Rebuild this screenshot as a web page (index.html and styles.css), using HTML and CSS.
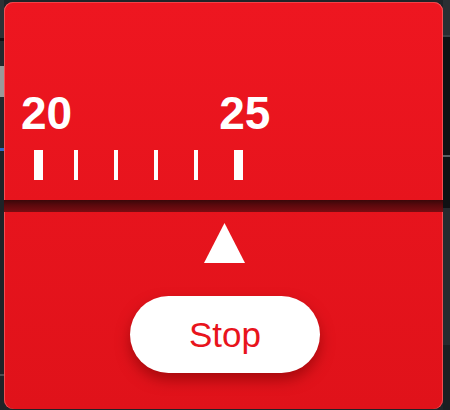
FILE: index.html
```html
<!DOCTYPE html>
<html lang="en">
<head>
<meta charset="utf-8">
<title>Timer ruler</title>
<link rel="stylesheet" href="styles.css">
</head>
<body>
  <div class="panel">
    <div class="scale">
      <div class="numbers">
        <span class="num">20</span>
        <span class="num">25</span>
      </div>
      <div class="ticks">
        <span class="cell"><span class="tick major"></span></span>
        <span class="cell"><span class="tick minor"></span></span>
        <span class="cell"><span class="tick minor"></span></span>
        <span class="cell"><span class="tick minor"></span></span>
        <span class="cell"><span class="tick minor"></span></span>
        <span class="cell"><span class="tick major"></span></span>
      </div>
    </div>
    <div class="rail"></div>
    <div class="lower">
      <svg class="pointer" width="41" height="40" viewBox="0 0 41 40" aria-hidden="true">
        <polygon points="20.5,0 41,40 0,40" fill="#ffffff"/>
      </svg>
      <button class="stop" type="button">Stop</button>
    </div>
  </div>
</body>
</html>
```
FILE: styles.css
```css
html, body {
  margin: 0;
  padding: 0;
}

body {
  width: 450px;
  height: 410px;
  overflow: hidden;
  font-family: "Liberation Sans", Arial, sans-serif;
  background:
    linear-gradient(to bottom, #2c3236 0 38px, #0e1012 38px 41px, #23292d 41px 66px, #9a9a9a 66px 97px, #23292d 97px 148px, #2d6ccc 148px 151px, #1e2327 151px 374px, #4a4f53 374px 376px, #1e2327 376px) left top / 4px 100% no-repeat,
    linear-gradient(to bottom, #2a2f33 0 35px, #3a4044 35px 37px, #0f1113 37px 155px, #5a5f63 155px 157px, #0f1113 157px 208px, #262b2f 208px 345px, #1b1f22 345px) right top / 7px 100% no-repeat,
    #1f2428;
}

.panel {
  width: 439px;
  height: 407px;
  margin: 2px 0 0 4px;
  border-radius: 9px;
  overflow: hidden;
  background: linear-gradient(to bottom, #ee1620, #e0121a);
  box-shadow: inset 1px 0 0 rgba(255, 130, 130, 0.55), inset -1px 0 0 rgba(255, 130, 130, 0.55), inset 0 1px 0 rgba(255, 130, 130, 0.4);
  display: flex;
  flex-direction: column;
}

.scale {
  height: 198px;
  box-sizing: border-box;
  padding-top: 88px;
}

.numbers {
  display: flex;
  gap: 147px;
  padding-left: 17px;
  height: 46px;
}

.num {
  color: #ffffff;
  font-weight: 700;
  font-size: 46px;
  line-height: 46px;
}

.ticks {
  display: flex;
  margin-top: 14px;
  padding-left: 30px;
  height: 30px;
}

.cell {
  width: 40px;
  display: flex;
}

.tick {
  display: block;
  height: 30px;
  background: #ffffff;
}

.tick.major {
  width: 9px;
}

.tick.minor {
  width: 4px;
}

.rail {
  height: 12px;
  flex: none;
  background: linear-gradient(to bottom, #3a0709 0%, #5c090d 45%, #7a0c12 100%);
}

.lower {
  flex: 1;
  display: flex;
  flex-direction: column;
  align-items: flex-start;
  padding-top: 11px;
}

.pointer {
  display: block;
  margin-left: 200px;
}

.stop {
  margin: 33px 0 0 126px;
  width: 190px;
  height: 77px;
  border: none;
  border-radius: 39px;
  background: #ffffff;
  color: #e8141c;
  font-family: "Liberation Sans", Arial, sans-serif;
  font-size: 35px;
  padding: 0;
  box-shadow: 0 7px 14px rgba(110, 0, 0, 0.5);
  display: flex;
  align-items: center;
  justify-content: center;
}
```
